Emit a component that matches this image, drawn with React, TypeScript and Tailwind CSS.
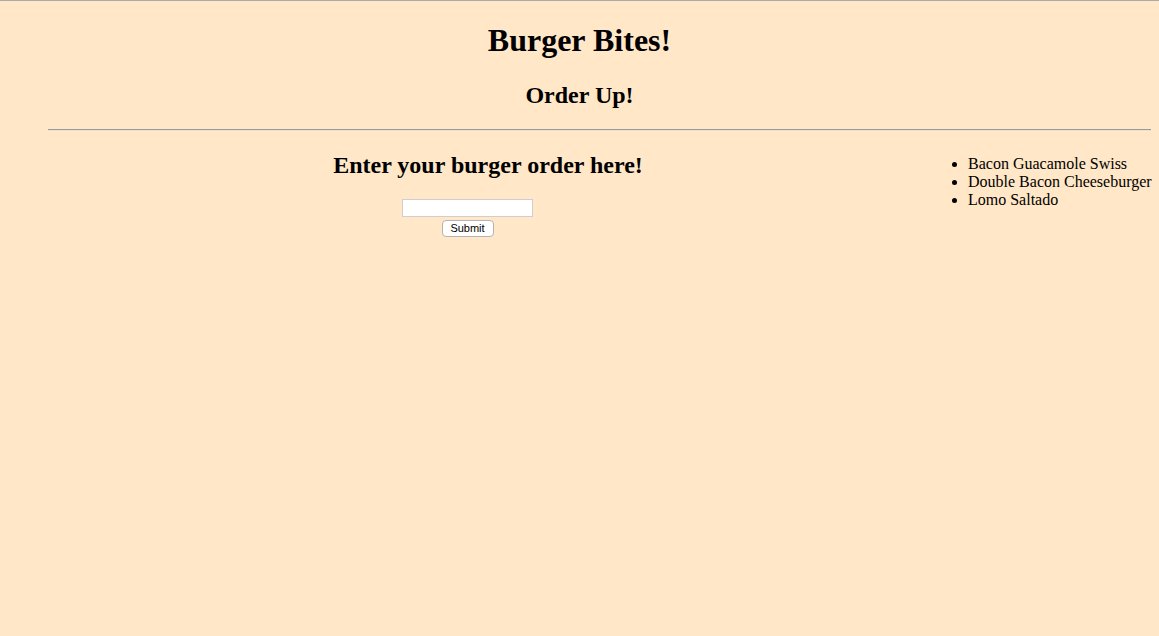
import React from "react";

export default function App() {
  return (
    <div
      className="min-h-screen bg-[#ffe7c7] border-t border-[#a9a9a9] text-black"
      style={{ fontFamily: '"Liberation Serif", "Times New Roman", serif' }}
    >
      <h1 className="text-center text-[32px] font-bold leading-[37px] pt-[21px]">Burger Bites!</h1>
      <h2 className="text-center text-[24px] font-bold leading-[28px] mt-[22px]">Order Up!</h2>
      <div className="ml-[48px] mr-[8px] mt-[20px] border-t border-[#9a9a9a] border-b border-b-[#eee0cc]" />
      <div className="flex">
        <div className="ml-[48px] w-[880px] text-center">
          <h2 className="text-[24px] font-bold leading-[28px] mt-[20px]">Enter your burger order here!</h2>
          <form
            className="flex flex-col items-center mt-[20px] pr-[41px]"
            onSubmit={(e) => e.preventDefault()}
          >
            <input
              type="text"
              className="w-[131px] h-[18px] bg-white border border-[#cfcfcf] outline-none"
            />
            <button
              type="submit"
              className="mt-[3px] w-[52px] h-[17px] bg-white border border-[#b4b4b4] rounded-[4px] text-[11px] leading-[15px]"
              style={{ fontFamily: '"Liberation Sans", Arial, sans-serif' }}
            >
              Submit
            </button>
          </form>
        </div>
        <div className="flex-1">
          <ul className="list-disc pl-[40px] mt-[24px] text-[16px] leading-[18px]">
            <li>Bacon Guacamole Swiss</li>
            <li>Double Bacon Cheeseburger</li>
            <li>Lomo Saltado</li>
          </ul>
        </div>
      </div>
    </div>
  );
}
